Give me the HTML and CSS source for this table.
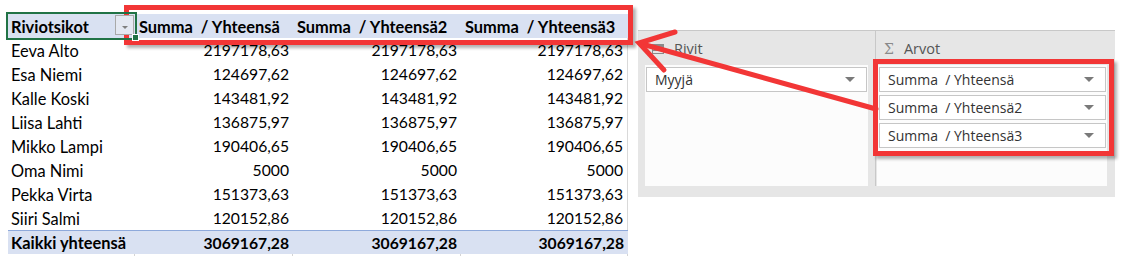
FILE: index.html
```html
<!DOCTYPE html>
<html lang="fi">
<head>
<meta charset="utf-8">
<title>Pivot</title>
<link rel="stylesheet" href="styles.css">
</head>
<body>
<div class="page">
  <div class="pivot">
    <div class="row head">
      <div class="cell lbl sel">Riviotsikot<span class="dd"><span class="tri"></span></span></div>
      <div class="cell hd">Summa  / Yhteensä</div>
      <div class="cell hd">Summa  / Yhteensä2</div>
      <div class="cell hd">Summa  / Yhteensä3</div>
    </div>
    <div class="row"><div class="cell lbl">Eeva Alto</div><div class="cell num">2197178,63</div><div class="cell num">2197178,63</div><div class="cell num">2197178,63</div></div>
    <div class="row"><div class="cell lbl">Esa Niemi</div><div class="cell num">124697,62</div><div class="cell num">124697,62</div><div class="cell num">124697,62</div></div>
    <div class="row"><div class="cell lbl">Kalle Koski</div><div class="cell num">143481,92</div><div class="cell num">143481,92</div><div class="cell num">143481,92</div></div>
    <div class="row"><div class="cell lbl">Liisa Lahti</div><div class="cell num">136875,97</div><div class="cell num">136875,97</div><div class="cell num">136875,97</div></div>
    <div class="row"><div class="cell lbl">Mikko Lampi</div><div class="cell num">190406,65</div><div class="cell num">190406,65</div><div class="cell num">190406,65</div></div>
    <div class="row"><div class="cell lbl">Oma Nimi</div><div class="cell num">5000</div><div class="cell num">5000</div><div class="cell num">5000</div></div>
    <div class="row"><div class="cell lbl">Pekka Virta</div><div class="cell num">151373,63</div><div class="cell num">151373,63</div><div class="cell num">151373,63</div></div>
    <div class="row"><div class="cell lbl">Siiri Salmi</div><div class="cell num">120152,86</div><div class="cell num">120152,86</div><div class="cell num">120152,86</div></div>
    <div class="row total"><div class="cell lbl">Kaikki yhteensä</div><div class="cell num">3069167,28</div><div class="cell num">3069167,28</div><div class="cell num">3069167,28</div></div>
    <div class="row tail"><div class="cell"></div><div class="cell"></div><div class="cell"></div><div class="cell"></div></div>
  </div>

  <div class="panel">
    <div class="area area-rows">
      <div class="area-head">
        <svg class="ico" width="12" height="10" viewBox="0 0 12 10"><rect x="0.5" y="0.5" width="11" height="9" fill="none" stroke="#8a8a8a"/><rect x="1" y="1" width="10" height="3" fill="#8a8a8a"/><line x1="1" y1="6.5" x2="11" y2="6.5" stroke="#8a8a8a"/></svg>
        <span>Rivit</span>
      </div>
      <div class="area-box">
        <div class="field"><span>Myyjä</span><span class="ftri"></span></div>
      </div>
    </div>
    <div class="divider"></div>
    <div class="area area-vals">
      <div class="area-head">
        <span class="sigma">Σ</span>
        <span>Arvot</span>
      </div>
      <div class="area-box">
        <div class="field"><span class="pre">Summa  / Yhteensä</span><span class="ftri"></span></div>
        <div class="field"><span class="pre">Summa  / Yhteensä2</span><span class="ftri"></span></div>
        <div class="field"><span class="pre">Summa  / Yhteensä3</span><span class="ftri"></span></div>
      </div>
    </div>
  </div>
</div>

<div class="mark mark-head"></div>
<div class="mark mark-fields"></div>
<svg class="arrow" width="1123" height="256" viewBox="0 0 1123 256">
  <line x1="876" y1="109" x2="642" y2="44" stroke="#f23636" stroke-width="5" stroke-linecap="round"/>
  <polyline points="675,32 639,43 664,70" fill="none" stroke="#f23636" stroke-width="5" stroke-linecap="round" stroke-linejoin="miter"/>
</svg>
</body>
</html>
```

FILE: styles.css
```css
html, body {
  margin: 0;
  padding: 0;
}
body {
  width: 1123px;
  height: 256px;
  overflow: hidden;
  position: relative;
  background: #ffffff;
  font-family: Lato, "Liberation Sans", sans-serif;
  color: #000;
}
.page {
  display: flex;
  align-items: flex-start;
  padding: 14px 0 0 8px;
}

/* pivot table */
.pivot {
  display: flex;
  flex-direction: column;
  width: 620px;
}
.row {
  display: grid;
  grid-template-columns: 127px 158px 168px 167px;
  height: 24px;
  font-size: 16.4px;
}
.cell {
  display: flex;
  align-items: center;
  box-sizing: border-box;
  white-space: pre;
  overflow: visible;
}
.cell:last-child {
  border-right: 1px solid #d9d9d9;
}
.lbl {
  padding-left: 3px;
}
.num {
  justify-content: flex-end;
  padding-right: 4px;
  font-size: 15.7px;
}
.head {
  background: #d9e1f2;
  font-weight: 700;
}
.head .cell:last-child {
  border-right: none;
}
.hd {
  padding-left: 4px;
}
.sel {
  position: relative;
  outline: 2px solid #217346;
  outline-offset: 0;
  z-index: 1;
}
.sel::after {
  content: "";
  position: absolute;
  right: -4px;
  bottom: -3px;
  width: 5px;
  height: 5px;
  background: #217346;
  border: 1px solid #fff;
}
.dd {
  position: absolute;
  right: 1px;
  top: 1px;
  width: 19px;
  height: 20px;
  box-sizing: border-box;
  border: 1px solid #a9a9a9;
  background: #e4e8f2;
  display: flex;
  align-items: flex-end;
  justify-content: center;
  padding-bottom: 5px;
}
.tri {
  width: 0;
  height: 0;
  border-left: 3px solid transparent;
  border-right: 3px solid transparent;
  border-top: 3px solid #7f7f7f;
}
.total {
  background: #d9e1f2;
  font-weight: 700;
  border-top: 1px solid #8ea9db;
  box-sizing: border-box;
}
.total .cell:last-child {
  border-right: none;
}
.tail {
  height: 10px;
}
.tail .cell {
  border-right: 1px solid #d4d4d4;
}

/* field list panel */
.panel {
  margin-left: 10px;
  margin-top: 16px;
  width: 477px;
  height: 167px;
  box-sizing: border-box;
  background: #e6e6e6;
  border-top: 1px solid #c8c8c8;
  display: flex;
  padding: 0 8px 0 7px;
  font-family: "Open Sans", "Noto Sans", sans-serif;
  font-size: 14px;
  color: #444;
}
.area {
  display: flex;
  flex-direction: column;
}
.area-rows {
  width: 223px;
  margin-right: 7px;
}
.area-vals {
  width: 230px;
  margin-left: 1px;
}
.divider {
  width: 1px;
  height: 155px;
  background: #c8c8c8;
}
.area-head {
  height: 34px;
  display: flex;
  align-items: center;
  padding-top: 1px;
  box-sizing: border-box;
  gap: 10px;
  color: #555;
  font-size: 14.5px;
}
.area-rows .area-head {
  padding-left: 7px;
}
.area-vals .area-head {
  padding-left: 7px;
}
.sigma {
  font-family: "DejaVu Serif", serif;
  color: #8a8a8a;
  font-size: 14px;
}
.area-box {
  background: #fcfcfc;
  height: 121px;
  box-sizing: border-box;
  display: flex;
  flex-direction: column;
  gap: 3px;
}
.area-rows .area-box {
  padding: 2px 1px 0 1px;
}
.area-vals .area-box {
  padding: 2px 1px 0 2px;
}
.field {
  height: 25px;
  box-sizing: border-box;
  border: 1px solid #c6c6c6;
  background: #fff;
  display: flex;
  align-items: center;
  justify-content: space-between;
  padding: 0 11px 0 8px;
  color: #333;
}
.pre {
  white-space: pre;
}
.ftri {
  width: 0;
  height: 0;
  border-left: 5px solid transparent;
  border-right: 5px solid transparent;
  border-top: 5px solid #7a7a7a;
}

/* annotations */
.mark {
  position: absolute;
  box-sizing: border-box;
  border: 5px solid #f23636;
  box-shadow: 3px 3px 3px rgba(0, 0, 0, 0.3);
}
.mark-head {
  left: 124px;
  top: 5px;
  width: 509px;
  height: 40px;
}
.mark-fields {
  left: 873px;
  top: 59px;
  width: 241px;
  height: 97px;
}
.arrow {
  position: absolute;
  left: 0;
  top: 0;
  pointer-events: none;
}
```
